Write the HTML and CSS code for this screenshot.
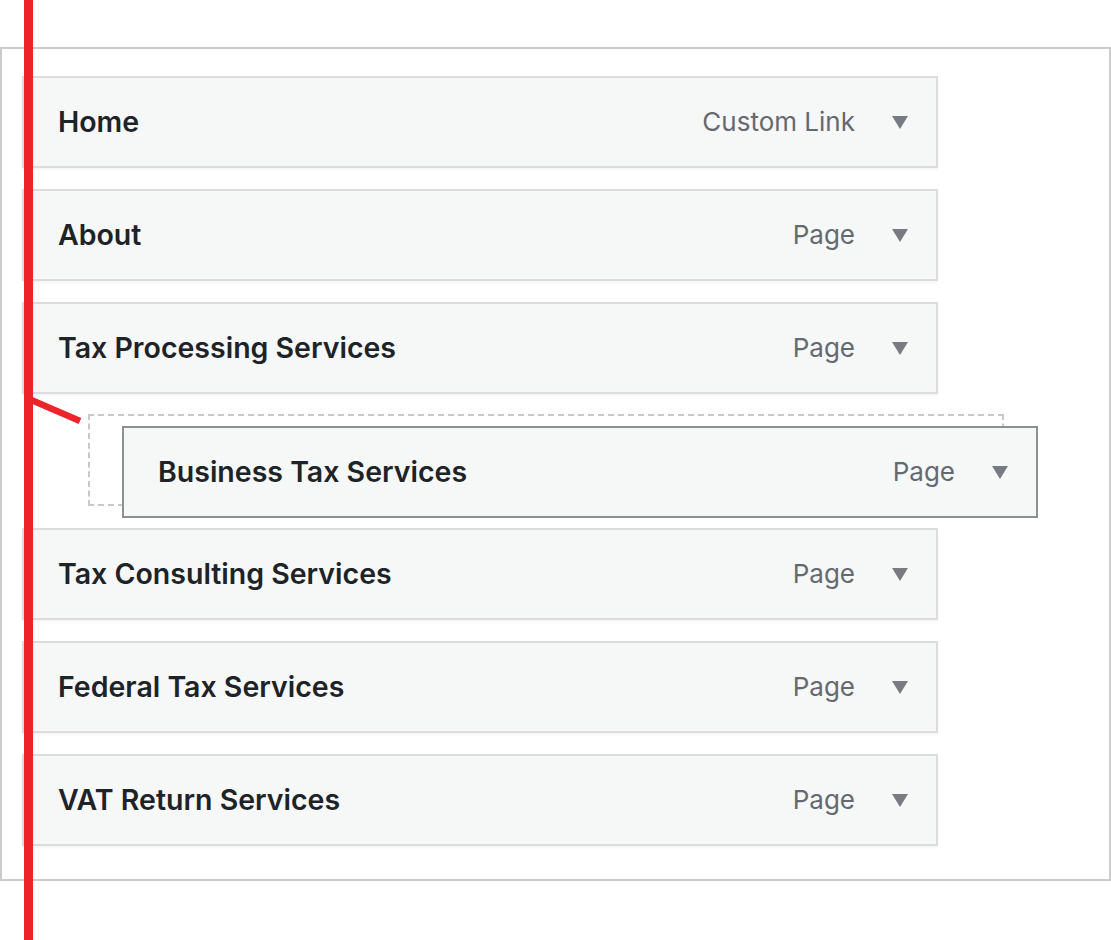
FILE: index.html
```html
<!DOCTYPE html>
<html>
<head>
<meta charset="utf-8">
<link rel="stylesheet" href="styles.css">
</head>
<body>
<div class="page">
  <div class="menu">
    <div class="item"><span class="title">Home</span><span class="meta"><span class="type">Custom Link</span><span class="arrow"></span></span></div>
    <div class="item"><span class="title">About</span><span class="meta"><span class="type">Page</span><span class="arrow"></span></span></div>
    <div class="item"><span class="title">Tax Processing Services</span><span class="meta"><span class="type">Page</span><span class="arrow"></span></span></div>
    <div class="placeholder">
      <div class="item dragged"><span class="title">Business Tax Services</span><span class="meta"><span class="type">Page</span><span class="arrow"></span></span></div>
    </div>
    <div class="item"><span class="title">Tax Consulting Services</span><span class="meta"><span class="type">Page</span><span class="arrow"></span></span></div>
    <div class="item"><span class="title">Federal Tax Services</span><span class="meta"><span class="type">Page</span><span class="arrow"></span></span></div>
    <div class="item"><span class="title">VAT Return Services</span><span class="meta"><span class="type">Page</span><span class="arrow"></span></span></div>
  </div>
  <svg class="guide" width="90" height="940" viewBox="0 0 90 940">
    <line x1="28.5" y1="0" x2="28.5" y2="940" stroke="#ec2328" stroke-width="9"/>
    <line x1="29" y1="399" x2="80" y2="421" stroke="#ec2328" stroke-width="6.5"/>
  </svg>
</div>
</body>
</html>
```

FILE: styles.css
```css
html, body {
  margin: 0;
  padding: 0;
  background: #ffffff;
}
.page {
  position: relative;
  width: 1111px;
  height: 940px;
  padding-top: 47px;
  box-sizing: border-box;
}
.menu {
  box-sizing: border-box;
  width: 1111px;
  height: 834px;
  border: 2px solid #cccccc;
  padding: 27px 20px 0 20px;
  display: flex;
  flex-direction: column;
  gap: 21px;
  font-family: Inter, "Liberation Sans", sans-serif;
}
.item {
  box-sizing: border-box;
  width: 916px;
  height: 92px;
  flex: none;
  background: #f6f7f7;
  border: 2px solid #dcdcde;
  box-shadow: 0 2px 2px rgba(0, 0, 0, 0.04);
  display: flex;
  align-items: center;
  justify-content: space-between;
  padding: 0 28px 0 34px;
}
.title {
  font-size: 28.5px;
  font-weight: 600;
  color: #1d2327;
  margin-top: -2px;
}
.meta {
  display: flex;
  align-items: center;
  gap: 37px;
}
.type {
  font-size: 26px;
  font-weight: 400;
  color: #646970;
  margin-top: -2px;
}
.arrow {
  width: 0;
  height: 0;
  border-left: 8px solid transparent;
  border-right: 8px solid transparent;
  border-top: 13px solid #787c82;
}
.placeholder {
  position: relative;
  box-sizing: border-box;
  width: 916px;
  height: 92px;
  flex: none;
  margin-left: 66px;
  margin-top: -1px;
  margin-bottom: 1px;
  border: 2px dashed #c8c9cc;
}
.dragged {
  position: absolute;
  left: 32px;
  top: 10px;
  border-color: #8c8f94;
  box-shadow: none;
}
.guide {
  position: absolute;
  left: 0;
  top: 0;
}
```
